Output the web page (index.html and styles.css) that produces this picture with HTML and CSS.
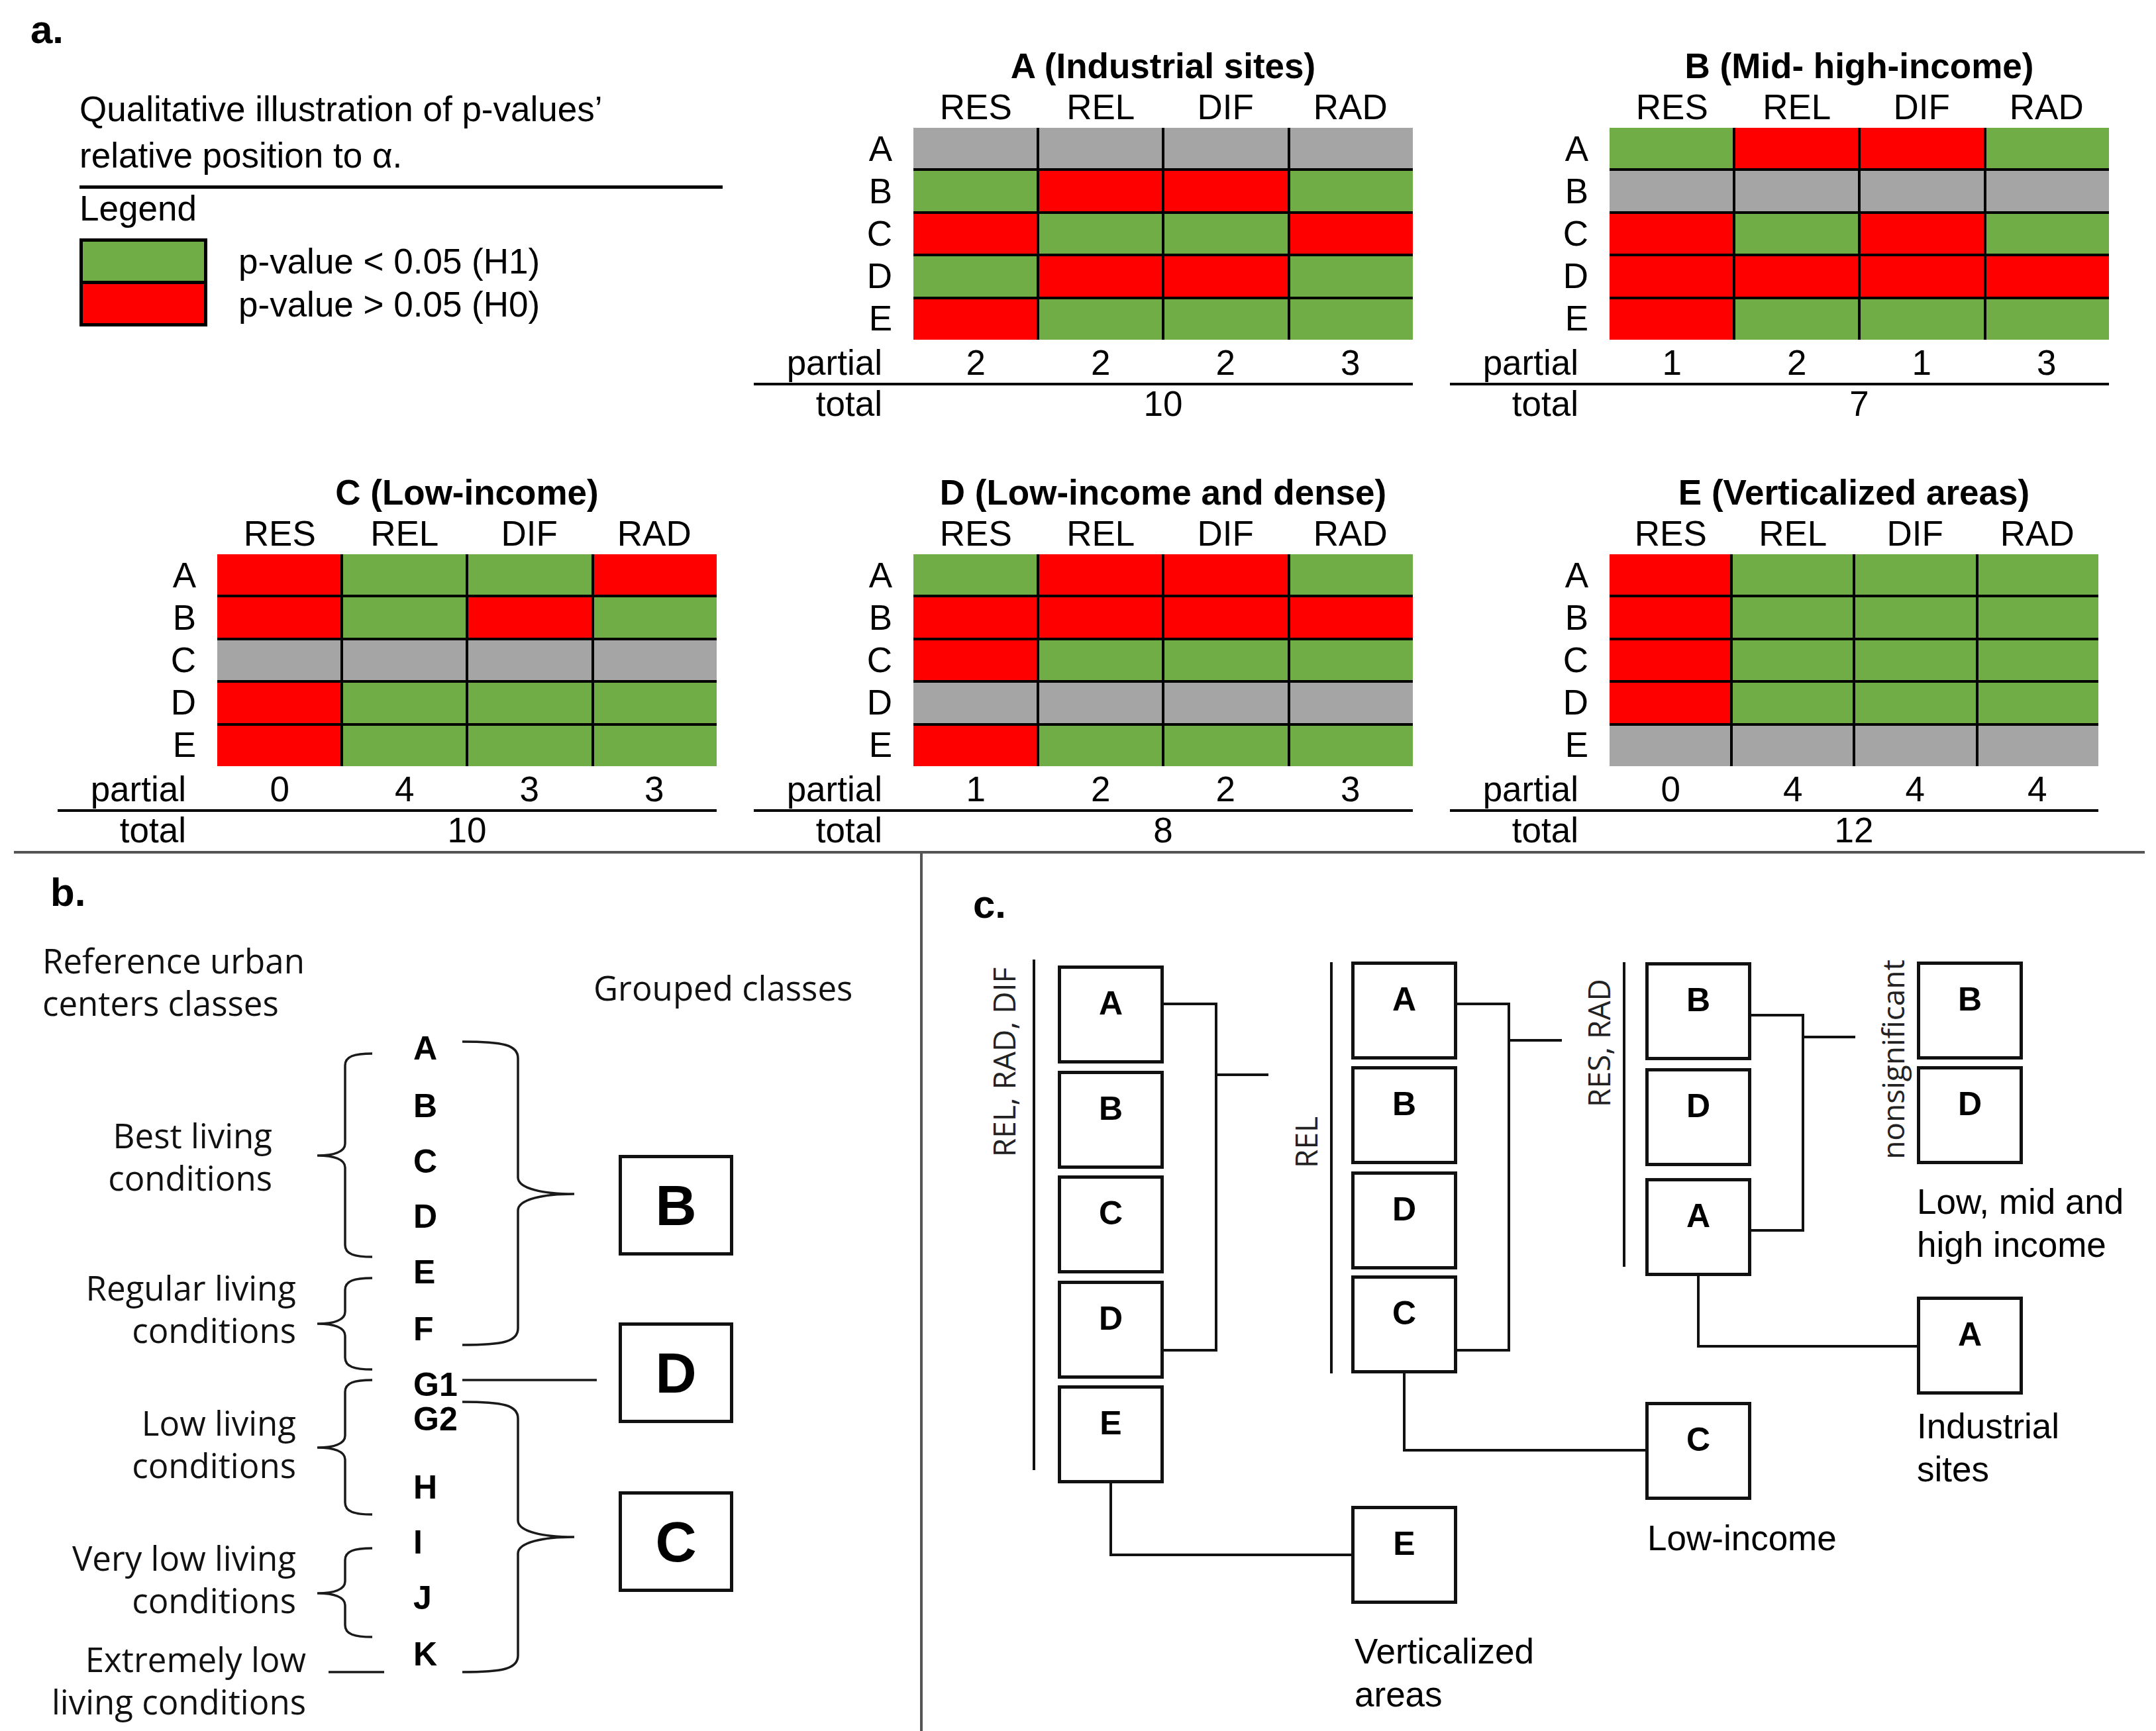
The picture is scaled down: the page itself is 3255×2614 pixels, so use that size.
FILE: index.html
```html
<!DOCTYPE html>
<html lang="en">
<head>
<meta charset="utf-8">
<title>Figure</title>
<link rel="stylesheet" href="styles.css">
</head>
<body>
<div class="fig">
  <section class="pa">
    <div class="plabel pa-label">a.</div>
    <div class="pa-grid">
      <div class="legend">
        <p class="legend-title">Qualitative illustration of p-values’<br>relative position to α.</p>
        <div class="legend-rule"></div>
        <p class="legend-head">Legend</p>
        <div class="legend-items">
          <div class="swatch"><span class="sw-g"></span><span class="sw-r"></span></div>
          <div class="legend-text"><div>p-value &lt; 0.05 (H1)</div><div>p-value &gt; 0.05 (H0)</div></div>
        </div>
      </div>

      <div class="mx">
        <div class="mx-title">A (Industrial sites)</div>
        <div></div><div class="mx-h">RES</div><div class="mx-h">REL</div><div class="mx-h">DIF</div><div class="mx-h">RAD</div>
        <div class="mx-rl"><div>A</div><div>B</div><div>C</div><div>D</div><div>E</div></div>
        <div class="mx-cells">
          <span class="n"></span><span class="n"></span><span class="n"></span><span class="n"></span>
          <span class="g"></span><span class="r"></span><span class="r"></span><span class="g"></span>
          <span class="r"></span><span class="g"></span><span class="g"></span><span class="r"></span>
          <span class="g"></span><span class="r"></span><span class="r"></span><span class="g"></span>
          <span class="r"></span><span class="g"></span><span class="g"></span><span class="g"></span>
        </div>
        <div class="mx-pl">partial</div><div class="mx-n">2</div><div class="mx-n">2</div><div class="mx-n">2</div><div class="mx-n">3</div>
        <div class="mx-tl">total</div><div class="mx-tot">10</div>
      </div>

      <div class="mx">
        <div class="mx-title">B (Mid- high-income)</div>
        <div></div><div class="mx-h">RES</div><div class="mx-h">REL</div><div class="mx-h">DIF</div><div class="mx-h">RAD</div>
        <div class="mx-rl"><div>A</div><div>B</div><div>C</div><div>D</div><div>E</div></div>
        <div class="mx-cells">
          <span class="g"></span><span class="r"></span><span class="r"></span><span class="g"></span>
          <span class="n"></span><span class="n"></span><span class="n"></span><span class="n"></span>
          <span class="r"></span><span class="g"></span><span class="r"></span><span class="g"></span>
          <span class="r"></span><span class="r"></span><span class="r"></span><span class="r"></span>
          <span class="r"></span><span class="g"></span><span class="g"></span><span class="g"></span>
        </div>
        <div class="mx-pl">partial</div><div class="mx-n">1</div><div class="mx-n">2</div><div class="mx-n">1</div><div class="mx-n">3</div>
        <div class="mx-tl">total</div><div class="mx-tot">7</div>
      </div>

      <div class="mx">
        <div class="mx-title">C (Low-income)</div>
        <div></div><div class="mx-h">RES</div><div class="mx-h">REL</div><div class="mx-h">DIF</div><div class="mx-h">RAD</div>
        <div class="mx-rl"><div>A</div><div>B</div><div>C</div><div>D</div><div>E</div></div>
        <div class="mx-cells">
          <span class="r"></span><span class="g"></span><span class="g"></span><span class="r"></span>
          <span class="r"></span><span class="g"></span><span class="r"></span><span class="g"></span>
          <span class="n"></span><span class="n"></span><span class="n"></span><span class="n"></span>
          <span class="r"></span><span class="g"></span><span class="g"></span><span class="g"></span>
          <span class="r"></span><span class="g"></span><span class="g"></span><span class="g"></span>
        </div>
        <div class="mx-pl">partial</div><div class="mx-n">0</div><div class="mx-n">4</div><div class="mx-n">3</div><div class="mx-n">3</div>
        <div class="mx-tl">total</div><div class="mx-tot">10</div>
      </div>

      <div class="mx">
        <div class="mx-title">D (Low-income and dense)</div>
        <div></div><div class="mx-h">RES</div><div class="mx-h">REL</div><div class="mx-h">DIF</div><div class="mx-h">RAD</div>
        <div class="mx-rl"><div>A</div><div>B</div><div>C</div><div>D</div><div>E</div></div>
        <div class="mx-cells">
          <span class="g"></span><span class="r"></span><span class="r"></span><span class="g"></span>
          <span class="r"></span><span class="r"></span><span class="r"></span><span class="r"></span>
          <span class="r"></span><span class="g"></span><span class="g"></span><span class="g"></span>
          <span class="n"></span><span class="n"></span><span class="n"></span><span class="n"></span>
          <span class="r"></span><span class="g"></span><span class="g"></span><span class="g"></span>
        </div>
        <div class="mx-pl">partial</div><div class="mx-n">1</div><div class="mx-n">2</div><div class="mx-n">2</div><div class="mx-n">3</div>
        <div class="mx-tl">total</div><div class="mx-tot">8</div>
      </div>

      <div class="mx mx-narrow">
        <div class="mx-title">E (Verticalized areas)</div>
        <div></div><div class="mx-h">RES</div><div class="mx-h">REL</div><div class="mx-h">DIF</div><div class="mx-h">RAD</div>
        <div class="mx-rl"><div>A</div><div>B</div><div>C</div><div>D</div><div>E</div></div>
        <div class="mx-cells">
          <span class="r"></span><span class="g"></span><span class="g"></span><span class="g"></span>
          <span class="r"></span><span class="g"></span><span class="g"></span><span class="g"></span>
          <span class="r"></span><span class="g"></span><span class="g"></span><span class="g"></span>
          <span class="r"></span><span class="g"></span><span class="g"></span><span class="g"></span>
          <span class="n"></span><span class="n"></span><span class="n"></span><span class="n"></span>
        </div>
        <div class="mx-pl">partial</div><div class="mx-n">0</div><div class="mx-n">4</div><div class="mx-n">4</div><div class="mx-n">4</div>
        <div class="mx-tl">total</div><div class="mx-tot">12</div>
      </div>
    </div>
  </section>

  <section class="bottom">
    <div class="pb">
      <svg class="lines" width="1368" height="1325" viewBox="21 1289 1368 1325">
        <g fill="none" stroke="#1a1a1a" stroke-width="3.5">
          <path d="M562 1591 C535 1591 521 1595 521 1609 V1727 C521 1739 505 1745 479 1745 C505 1745 521 1751 521 1763 V1880 C521 1894 535 1898 562 1898"/>
          <path d="M562 1930 C535 1930 521 1934 521 1948 V1981 C521 1993 505 1999 479 1999 C505 1999 521 2005 521 2017 V2050 C521 2064 535 2068 562 2068"/>
          <path d="M562 2084 C535 2084 521 2088 521 2102 V2168 C521 2180 505 2186 479 2186 C505 2186 521 2192 521 2204 V2269 C521 2283 535 2287 562 2287"/>
          <path d="M562 2338 C535 2338 521 2342 521 2356 V2388 C521 2400 505 2406 479 2406 C505 2406 521 2412 521 2424 V2454 C521 2468 535 2472 562 2472"/>
          <path d="M496 2525 H580"/>
          <path d="M698 1573 C760 1573 782 1578 782 1598 V1778 C782 1795 820 1803 867 1803 C820 1803 782 1811 782 1828 V2006 C782 2026 760 2031 698 2031"/>
          <path d="M698 2117 C760 2117 782 2122 782 2142 V2296 C782 2313 820 2321 867 2321 C820 2321 782 2329 782 2346 V2500 C782 2520 760 2525 698 2525"/>
          <path d="M698 2084 H901"/>
        </g>
      </svg>
      <div class="plabel lab-b">b.</div>
      <div class="btext t-ref">Reference urban<br>centers classes</div>
      <div class="btext t-grp">Grouped classes</div>
      <div class="btext bright t-best">Best living<br>conditions</div>
      <div class="btext bright t-reg">Regular living<br>conditions</div>
      <div class="btext bright t-low">Low living<br>conditions</div>
      <div class="btext bright t-vlow">Very low living<br>conditions</div>
      <div class="btext bright t-ext">Extremely low<br>living conditions</div>

      <div class="cls" style="top:269px">A</div>
      <div class="cls" style="top:356px">B</div>
      <div class="cls" style="top:440px">C</div>
      <div class="cls" style="top:523px">D</div>
      <div class="cls" style="top:607px">E</div>
      <div class="cls" style="top:693px">F</div>
      <div class="cls" style="top:777px">G1</div>
      <div class="cls" style="top:829px">G2</div>
      <div class="cls" style="top:932px">H</div>
      <div class="cls" style="top:1015px">I</div>
      <div class="cls" style="top:1099px">J</div>
      <div class="cls" style="top:1184px">K</div>

      <div class="bbox" style="top:455px">B</div>
      <div class="bbox" style="top:708px">D</div>
      <div class="bbox" style="top:963px">C</div>
    </div>

    <div class="pc">
      <svg class="lines" width="1845" height="1325" viewBox="1393 1289 1845 1325">
        <g fill="none" stroke="#111" stroke-width="4">
          <path d="M1561 1449 V2220"/>
          <path d="M2010 1453 V2074"/>
          <path d="M2452 1453 V1913"/>
          <path d="M1757 1516 H1836 V2039 H1757 M1836 1623 H1915"/>
          <path d="M2200 1516 H2278 V2039 H2200 M2278 1571 H2358"/>
          <path d="M2644 1533 H2722 V1858 H2644 M2722 1566 H2801"/>
          <path d="M1677 2240 V2348 H2043"/>
          <path d="M2120 2072 V2190 H2486"/>
          <path d="M2564 1925 V2033 H2896"/>
        </g>
      </svg>
      <div class="plabel lab-c">c.</div>

      <div class="rot" style="left:122px;top:315px">REL, RAD, DIF</div>
      <div class="rot" style="left:578px;top:436px">REL</div>
      <div class="rot" style="left:1020px;top:286px">RES, RAD</div>
      <div class="rot" style="left:1464px;top:311px">nonsignificant</div>

      <div class="cbox" style="left:204px;top:169px">A</div>
      <div class="cbox" style="left:204px;top:328px">B</div>
      <div class="cbox" style="left:204px;top:486px">C</div>
      <div class="cbox" style="left:204px;top:645px">D</div>
      <div class="cbox" style="left:204px;top:803px">E</div>

      <div class="cbox" style="left:647px;top:163px">A</div>
      <div class="cbox" style="left:647px;top:321px">B</div>
      <div class="cbox" style="left:647px;top:480px">D</div>
      <div class="cbox" style="left:647px;top:637px">C</div>
      <div class="cbox" style="left:647px;top:985px">E</div>

      <div class="cbox" style="left:1091px;top:164px">B</div>
      <div class="cbox" style="left:1091px;top:324px">D</div>
      <div class="cbox" style="left:1091px;top:490px">A</div>
      <div class="cbox" style="left:1091px;top:828px">C</div>

      <div class="cbox" style="left:1501px;top:163px">B</div>
      <div class="cbox" style="left:1501px;top:321px">D</div>
      <div class="cbox" style="left:1501px;top:669px">A</div>

      <div class="ctext t-lmh">Low, mid and<br>high income</div>
      <div class="ctext t-ind">Industrial<br>sites</div>
      <div class="ctext t-li">Low-income</div>
      <div class="ctext t-va">Verticalized<br>areas</div>
    </div>
  </section>
</div>
</body>
</html>
```

FILE: styles.css
```css
* { box-sizing: border-box; }

html, body {
  margin: 0;
  padding: 0;
  background: #fff;
}

.fig {
  width: 3255px;
  height: 2614px;
  overflow: hidden;
  color: #000;
  font-family: "Liberation Sans", Arial, sans-serif;
  background: #fff;
}

.plabel {
  font-weight: bold;
  font-size: 60px;
  line-height: 60px;
}

/* ---------- panel a ---------- */
.pa {
  height: 1285px;
}

.pa-label {
  height: 70px;
  padding: 15px 0 0 46px;
}

.pa-grid {
  display: grid;
  grid-template-columns: 995px 995px 995px;
  grid-template-rows: 568px 568px;
  column-gap: 56px;
  row-gap: 76px;
  padding-left: 87px;
}

.legend {
  padding: 60px 0 0 33px;
  font-size: 53px;
}

.legend-title {
  margin: 0;
  line-height: 70px;
  white-space: nowrap;
}

.legend-rule {
  margin-top: 10px;
  width: 971px;
  height: 5px;
  background: #000;
}

.legend-head {
  margin: 0;
  line-height: 60px;
}

.legend-items {
  margin-top: 15px;
  display: flex;
  gap: 47px;
}

.swatch {
  width: 193px;
  height: 133px;
  border: 5px solid #000;
  display: flex;
  flex-direction: column;
}

.sw-g {
  display: block;
  height: 59px;
  background: #70ad47;
}

.sw-r {
  display: block;
  height: 64px;
  background: #ff0000;
  border-top: 5px solid #000;
}

.legend-text {
  padding-top: 2px;
  line-height: 65px;
  white-space: nowrap;
}

/* matrix block */
.mx {
  display: grid;
  grid-template-columns: 241px repeat(4, 1fr);
  width: 995px;
  font-size: 53px;
  line-height: 1;
  align-self: start;
}

.mx-narrow {
  width: 979px;
}

.mx-title {
  grid-column: 2 / 6;
  height: 60px;
  line-height: 60px;
  text-align: center;
  font-weight: bold;
  white-space: nowrap;
}

.mx-h {
  height: 63px;
  line-height: 63px;
  text-align: center;
}

.mx-rl div {
  height: 64px;
  line-height: 64px;
  text-align: right;
  padding-right: 32px;
}

.mx-cells {
  grid-column: 2 / 6;
  display: grid;
  grid-template-columns: repeat(4, 1fr);
  grid-template-rows: repeat(5, 1fr);
  gap: 4px;
  height: 320px;
  background: #000;
}

.mx-cells .g { background: #70ad47; }
.mx-cells .r { background: #ff0000; }
.mx-cells .n { background: #a5a5a5; }

.mx-pl,
.mx-n {
  height: 65px;
  padding-top: 5px;
  line-height: 60px;
}

.mx-pl {
  text-align: right;
  padding-right: 47px;
}

.mx-n {
  text-align: center;
}

.mx-tl,
.mx-tot {
  border-top: 4px solid #000;
  height: 60px;
  line-height: 56px;
}

.mx-tl {
  text-align: right;
  padding-right: 47px;
}

.mx-tot {
  grid-column: 2 / 6;
  text-align: center;
}

/* ---------- bottom panels ---------- */
.bottom {
  display: flex;
  margin: 0 17px 0 21px;
  height: 1329px;
  border-top: 4px solid #555;
}

.pb {
  position: relative;
  width: 1372px;
  border-right: 4px solid #555;
}

.pc {
  position: relative;
  flex: 1;
}

.lines {
  position: absolute;
  left: 0;
  top: 0;
  display: block;
}

.lab-b {
  position: absolute;
  left: 55px;
  top: 29px;
}

.lab-c {
  position: absolute;
  left: 76px;
  top: 47px;
}

.btext {
  position: absolute;
  font-family: "Open Sans", "Liberation Sans", sans-serif;
  font-size: 51px;
  line-height: 64px;
  white-space: nowrap;
  color: #111;
}

.bright {
  text-align: right;
}

.t-ref { left: 43px; top: 129px; }
.t-grp { left: 875px; top: 170px; }
.t-best { right: 978px; top: 393px; }
.t-reg { right: 942px; top: 623px; }
.t-low { right: 942px; top: 827px; }
.t-vlow { right: 942px; top: 1031px; }
.t-ext { right: 927px; top: 1184px; }

.cls {
  position: absolute;
  left: 603px;
  font-weight: bold;
  font-size: 50px;
  line-height: 50px;
}

.bbox {
  position: absolute;
  left: 913px;
  width: 173px;
  height: 152px;
  border: 5px solid #111;
  display: flex;
  align-items: center;
  justify-content: center;
  font-weight: bold;
  font-size: 86px;
  line-height: 1;
  background: #fff;
}

.cbox {
  position: absolute;
  width: 160px;
  height: 148px;
  border: 5px solid #111;
  padding-top: 27px;
  text-align: center;
  font-weight: bold;
  font-size: 50px;
  line-height: 50px;
  background: #fff;
}

.rot {
  position: absolute;
  transform: translate(-50%, -50%) rotate(-90deg);
  font-family: "Open Sans", "Liberation Sans", sans-serif;
  font-size: 46px;
  line-height: 1;
  white-space: nowrap;
  color: #222;
}

.ctext {
  position: absolute;
  font-size: 53px;
  line-height: 65px;
  white-space: nowrap;
}

.t-lmh { left: 1501px; top: 493px; }
.t-ind { left: 1501px; top: 832px; }
.t-li { left: 1094px; top: 1001px; }
.t-va { left: 652px; top: 1172px; }
```
